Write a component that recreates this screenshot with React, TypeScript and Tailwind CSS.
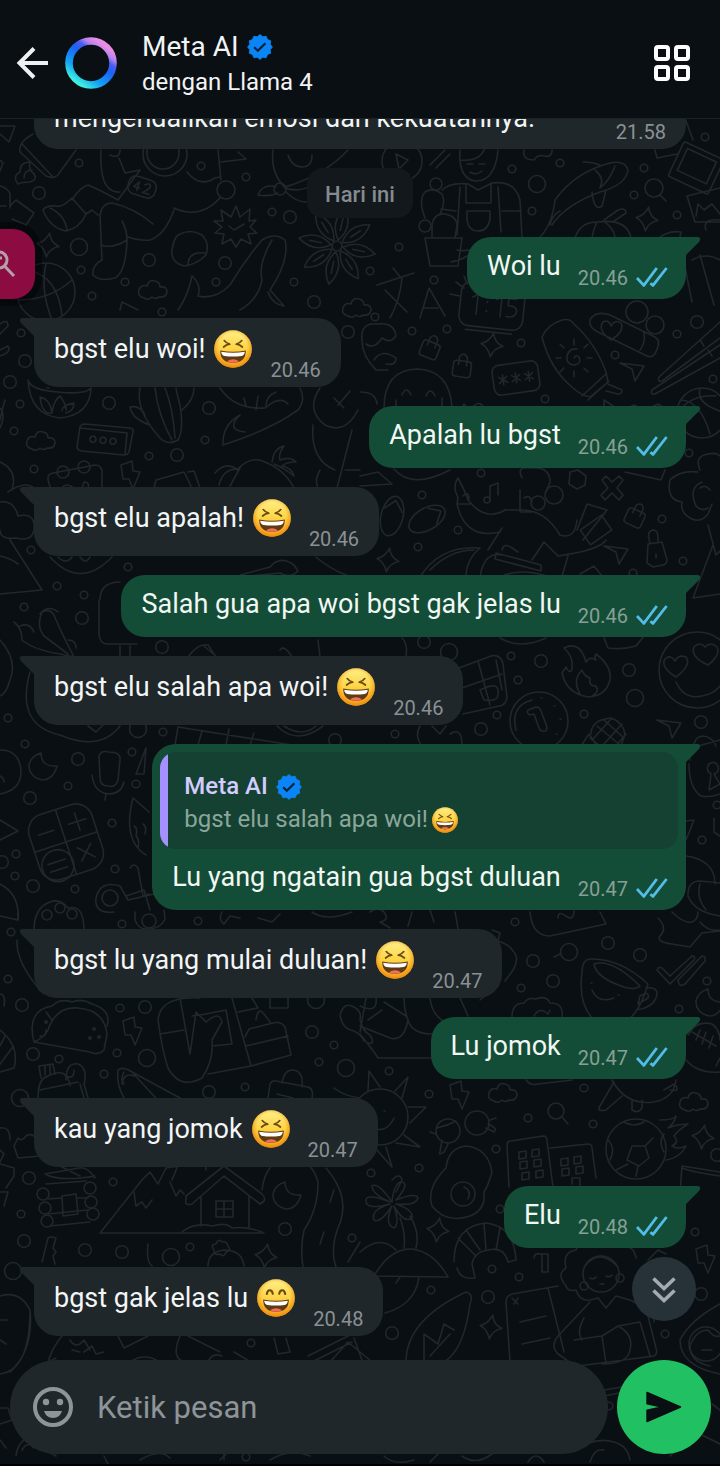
import React, { useId } from "react";

type Message = {
  from: "me" | "ai";
  text: string;
  time: string;
  emoji?: "squint" | "grin";
  quote?: boolean;
};

const messages: Message[] = [
  { from: "me", text: "Woi lu", time: "20.46" },
  { from: "ai", text: "bgst elu woi!", time: "20.46", emoji: "squint" },
  { from: "me", text: "Apalah lu bgst", time: "20.46" },
  { from: "ai", text: "bgst elu apalah!", time: "20.46", emoji: "squint" },
  { from: "me", text: "Salah gua apa woi bgst gak jelas lu", time: "20.46" },
  { from: "ai", text: "bgst elu salah apa woi!", time: "20.46", emoji: "squint" },
  { from: "me", text: "Lu yang ngatain gua bgst duluan", time: "20.47", quote: true },
  { from: "ai", text: "bgst lu yang mulai duluan!", time: "20.47", emoji: "squint" },
  { from: "me", text: "Lu jomok", time: "20.47" },
  { from: "ai", text: "kau yang jomok", time: "20.47", emoji: "squint" },
  { from: "me", text: "Elu", time: "20.48" },
  { from: "ai", text: "bgst gak jelas lu", time: "20.48", emoji: "grin" },
];

/* ---------- wallpaper ---------- */

const small = [
  [79, 163], [201, 166], [246, 177], [272, 212], [81, 270], [125, 282], [92, 296], [216, 282], [294, 282],
  [512, 169], [560, 163], [532, 211], [644, 168], [634, 195], [677, 215], [705, 137], [399, 247], [370, 271],
  [434, 280], [375, 317], [21, 333], [20, 404], [14, 431], [205, 440], [149, 456], [34, 469], [31, 550],
  [128, 567], [57, 586], [84, 595], [162, 312], [412, 331], [447, 329], [521, 343], [545, 399], [615, 355],
  [677, 334], [713, 379], [481, 473], [422, 495], [458, 530], [418, 547], [662, 519], [683, 561], [633, 573],
  [689, 453], [24, 607], [8, 718], [25, 744], [163, 732], [132, 752], [68, 786], [136, 784], [112, 823],
  [16, 854], [15, 876], [115, 869], [75, 889], [511, 656], [518, 680], [584, 714], [497, 715], [702, 840],
  [395, 734], [122, 924], [11, 932], [8, 979], [120, 1008], [59, 1059], [117, 1053], [104, 1074], [334, 1045],
  [319, 1062], [245, 1087], [113, 1182], [198, 921], [515, 922], [521, 988], [707, 981], [679, 1009],
  [389, 1071], [429, 1094], [584, 1088], [528, 1118], [593, 1124], [496, 1149], [371, 1173], [419, 1168],
  [21, 1214], [190, 1247], [352, 1238], [500, 1209], [492, 1269], [519, 1277], [431, 1290], [695, 1232],
  [665, 1334], [609, 1406], [251, 1343], [246, 1457], [717, 805],
];

const medium = [
  [39, 193], [290, 217], [149, 260], [225, 263], [314, 302], [25, 361], [10, 382], [109, 403], [209, 408],
  [177, 455], [348, 332], [697, 322], [82, 618], [162, 647], [78, 759], [30, 798], [33, 886], [335, 740],
  [2, 862], [424, 642], [541, 661], [629, 670], [481, 729], [701, 722], [22, 1005], [145, 1007], [33, 1054],
  [312, 1032], [209, 1092], [29, 1178], [608, 943], [640, 955], [533, 961], [553, 981], [24, 1241], [85, 1250],
  [122, 1252], [285, 1229], [488, 1297], [392, 1333], [701, 1294], [717, 1155],
];

const large = [
  [79, 247], [537, 184], [138, 729], [449, 652], [635, 698], [147, 1058], [316, 1000], [346, 1068], [20, 1098],
  [13, 1271], [171, 1257], [569, 952],
];

const clouds = [[153, 290], [41, 441], [503, 1093], [694, 1102], [357, 308]];
const bolts = [[130, 475], [132, 1031], [459, 1095], [705, 1259]];
const sparkles = [[48, 245], [647, 219], [492, 345], [388, 560], [703, 1137], [438, 1230], [266, 1256], [491, 1327]];
const moons = [[43, 767], [287, 1196], [710, 1003]];
const planes = [[633, 370], [670, 727], [617, 553]];
const bags = [[462, 368, 8], [635, 517, 25], [430, 349, 22]];

const sketches = [
  // astronaut, bottle and flag
  "M0 126H15L9 142L0 134M0 160l3 3l-3 8M33 134Q18 142 20 152L46 176Q56 180 60 172L76 150M22 144L52 176",
  "M18 184q-6-8 2-12q0-10 10-10q-2 8 4 12q4 6-4 8q-8 0-12 2M24 178q0-8 8-8",
  "M0 186q8 2 10 8v14M10 206l6-6l18 13l-8 12l-14-6M0 206h6",
  "M101 150Q100 175 106 185Q112 193 120 192M110 155q10 4 10-5M119 158L125 173L140 170L118 200M187 172Q200 188 215 178L220 177M220 198Q200 220 174 208M118 200Q100 190 88 185Q80 187 72 200",
  "M72 198Q78 205 86 214Q80 228 66 231Q50 228 43 210Q46 205 56 206Q62 208 72 198M86 214l6-4l6 5M50 208Q65 215 67 230M100 215Q102 203 112 203Q135 208 153 224M100 215L102 260Q92 265 93 275Q100 282 115 278Q126 272 127 240Q127 230 122 221M101 245q12 4 26-5M174 210Q165 235 150 240Q140 241 128 237",
  "M178 235q12-7 24 0q8 8 4 20q-10 10-22 11q-14-4-12-16q2-12 6-15zM188 265q0-14 18-12",
  "M218 150L221 180M221 162L246 159L238 152",
  "M178 310Q188 296 192 276Q202 285 198 296Q215 300 230 285Q245 260 262 240Q275 232 285 240Q290 260 270 290L284 306Q272 304 268 292M272 240Q258 264 262 280Q258 300 240 310M120 310l2-8l16 8",
  "M273 150Q270 172 285 188Q305 196 336 170M288 155q4 12 14 12q10 0 10-12M258 195q5-12 18-8M258 195q12 2 20-2M285 187Q325 175 348 150M306 202Q296 202 286 192",
  // gardener, cactus and koi
  "M396 154l12 6l-9 9zM430 165l15-15M436 168l14-14M524 150q-2 10 10 10q4-6 10-4q8 2 8-6",
  "M460 150Q458 178 475 181Q495 182 498 150M460 160q20 2 25-12M467 164h6M479 164h6M470 172q6 4 12-1M442 190Q450 182 468 184L478 190L492 183Q515 180 520 200L522 238M460 187L457 235M498 187L501 232M466 185v18h25v-20M467 211h23v8q-2 12-12 12q-10 0-11-12zM441 209l15 2M502 211h19",
  "M425 238h37l-4 28h-28zM432 237v-12q2-12 13-11q12 2 12 12l-2 12M425 218Q418 200 425 192q8-5 17 2q4 8-2 20M457 250q10 2 20-2M451 262q10-2 16-6",
  "M540 237Q552 225 555 200Q575 172 610 163Q625 160 628 170Q626 185 600 192Q565 205 552 225M583 162q12 0 18 4M595 170q10 8 5 18q10-8 15-22M592 192q2 20 10 14q2-8 4-16M550 225q2-10 10-14",
  "M575 238q5-16 22-16q30-4 34 16M597 222q-4 8-5 16M605 222q10 8 10 16M604 220l14-10q8-3 8 3l-12 8M657 240q10-10 24-8l-2 10",
  "M655 150l2 8l20-4M685 118l8 22M687 196l33-8M687 196l8 26h25M696 216l2-12l6 6l8-6l8 10M684 262l8 40M700 255l14 50M692 260q14-8 28 0M706 230q-4-12 14-10",
  // translation mark and clock
  "M377 285l37-12M393 268l8 10M402 278Q400 300 390 318M385 290q10 10 22 22M420 318l9-30l16 28M424 308h14M450 294l10 2M456 282l8 6M464 276l3 8",
  // salad bowl, box, corn
  "M28 380Q30 415 60 418Q90 415 91 388Q85 395 58 392Q30 390 28 380zM40 397q2 18 12 16q-2-14-12-16M52 412q2-12 8-16q6 8 6 14M66 413q8-2 8-10q-12 2-12 8M47 388h2M68 393h2",
  "M80 427q1-3 5-3l45 4q4 1 3 4l-4 20q-1 3-5 3l-42-4q-5-1-5-4zM80 428l47 5l-2 21",
  "M140 388Q135 410 160 438Q168 446 178 440Q184 430 180 405Q176 390 176 388M155 388Q158 415 172 440M165 388q8 20 10 50M150 425q-18-6-20-18q10-2 15 8M182 410q12-10 12-22",
  "M220 388Q235 410 265 408Q280 395 288 404M223 445Q222 425 240 415Q225 430 245 432M223 445Q270 430 298 410Q306 400 300 388M256 410l2-14M266 406q0-10 10-14M246 406l-2-8",
  "M215 473q10-12 22-4q-14 0-18 16M237 470Q250 455 265 462Q285 470 294 488M272 462q2-14 12-16q-6 8-4 14q10-4 16 2q-10 0-14 4q10 2 12 10q-10-8-20-12M230 486l10-18",
  "M48 480q-1-6 5-7l42-8q6 0 7 6v18M48 480l3 10M62 488q4-6 12 0M82 488l2-6q6 0 4 6M154 488l2-8l28-8l8 16M188 472l6-1l6 17",
  "M320 388Q305 410 325 425Q345 435 358 410M338 405l12-14M334 398l10 10M313 425Q310 460 335 470M352 430l-15 58M345 470h15M320 470q-6 10-2 18",
  "M0 324q8-6 8 2l-8 8M0 350l8-4q4 6-8 10M0 462Q18 470 12 490M8 492q20-14 30 0M0 502q14-2 18 14q18-4 16 14q-2 12-18 8Q0 540 0 530M10 540L42 590L0 594M0 556q10 2 18 8M5 400Q2 410 0 420M0 408q6 6 0 20",
  "M50 557Q80 590 112 557M58 557q8 8 14 0M80 557q6 8 10 0M240 575l30-8q10-12 24-2l4 6q-8 8-18 2l-40 4zM316 557q14 12 30 18M100 600q0-18 20-18",
  // toddler, lotion, chopsticks
  "M384 408Q384 370 417 369Q450 370 452 408M402 395q4-10 9 0M426 396q4-10 9 0M396 400v6M442 398v8M394 469Q412 490 450 470M360 392q16 0 17 12M362 340q-2-18 16-16q16-2 18 12q-6 8-14 2q-8 12-16 6M362 340q0 16 14 30h12M374 360q8-12 22-2q0 8-10 6",
  "M542 337q5-12 20-17q8-2 12 4q22 20 32 48l2 10l-18 15q-10-2-18-10q-22-18-30-50zM582 396l24-22M588 400l21-19M608 384l14 6q0 6-8 3l-8-2",
  "M574 358q2-4 5-1q3 6-4 8q-9 0-8-9q2-8 10-7M574 345v-6M574 371v6M561 358h-5M587 358h5M564 348l-4-4M584 348l4-4M564 368l-4 4M584 368l4 4",
  "M590 320q5-10 20-5l45 22q6 4 2 12q-3 10-10 7l-45-22q-14-6-12-14M611 340q-14-10-8-18q6-3 8 4q4-7 10-3q4 8-10 17M640 350q6-8 4-18",
  "M659 377L720 322M662 381L720 338M659 377q-2 5 3 4M652 390L720 345M655 394L720 358M652 390q-2 5 3 4M700 340l4 6M708 350l4 6",
  "M460 412l4-8q4 6 10 2q6-6 10 2q8-4 8 4M604 408v-8l12 8M630 408q4-6 8 0M650 408l8-4l6 4",
  // dancer and friends
  "M360 476l18-4l14 12l-32 2M458 478q8 15 10 22Q485 522 505 510L522 510M458 478q-6 8 0 20l-1 6l14 0M457 504Q465 540 500 532M463 496q6-6 6 4M490 500v-14l8-3v12",
  "M522 478q-6-12 8-10q20-2 20 14l-4 10M520 490v22h12M524 498q6-4 8 4M522 510Q545 510 560 535Q575 540 577 520M488 550L502 528M532 560l12-18l14 14Q600 550 606 540M577 530l10-26l20 6l-24 30M587 504l20 6M568 556l-6 20",
  "M420 577Q440 545 480 548Q466 560 466 577M430 570Q450 550 474 550M496 553l45 12v6l-46-12zM502 550q2-8 10-2l6 4M480 577q4-26 22-22M500 577q20-10 50 0M580 574l14-8l8 10",
  "M570 472l8-2l8 6l-1 9l-8 4l-8-5zM602 480l4-4l6 6l7-6l4 4l-6 8l6 7l-4 5l-7-7l-7 7l-4-5l7-7z",
  "M648 544l14-2l5 18q0 4-4 5l-10 2l-6-4zM650 543q-4-12 3-13q6 0 5 11M656 554v4",
  "M700 470q-6-14 8-16q8-2 12 2M698 472q-18-2-28 8q-4 20 12 22q-2 10 8 16q10 6 18-4l4-10M702 482q-14 6-6 24q6 6 12 2M710 490q-4-6-10-2M713 545L693 598l27-4M708 525l8 30l4-4M625 472l36 8l4-10",
  // chillies and sign
  "M14 622Q22 628 22 640Q34 650 60 654L74 657Q60 630 54 615Q50 608 42 612Q36 626 44 636L68 654M20 626q10-4 14 6M40 614q8-10 18-2M99 600v34q1 10 8 10h30M120 646v10M130 646v10M0 640Q18 660 10 680Q6 694 0 696M68 640q8 0 8 8",
  "M30 672Q15 725 60 735Q100 752 120 726M88 726l8 6l8-8M188 657q10-14 20-12l8 12M204 646l12 10M280 650q4-6 12 7M318 640l2 17",
  "M175 745l3-18l114 18M198 745l4-14M226 745l3-16M250 745l4-12M277 726q20 20 46 0M284 726q18 12 32 0",
  "M0 750q20 0 21 22q0 18-21 22M0 776q4 2 4 6M0 820L18 831L0 840M0 884q20 10 18 36",
  // microphone and cat
  "M99 756q2-6 10-4q12 0 11 8l-2 20q-2 8-10 6q-8 0-8-8zM92 775q2 18 17 19q12 0 15-12M106 794l-1 6M146 748l-2 26h-8zM133 798Q122 840 146 855M133 798l16 14M134 826q4 2 2 10q4 4 2 12M143 824q4 2 2 10",
  "M130 868q4-6 8 0l5 28l6-2M126 896l18-6l6 20M114 912q-20 2-18-14q4-18 24-12l8 14l26-6M34 930q0-22 16-28q10-4 18 6q16-4 16 22",
  // chocolate and fire
  "M459 668l32-12q10-2 12 8l4 34q-2 8-8 8l-36 8M462 688l40-14M478 661l12 44M496 660l6 30M480 690q20-10 18 4q0 8-14 6zM420 726q-6 10 2 20M432 726l8 8l6-8M450 734q12-8 12 12",
  "M564 648q16-8 22 14q4-6 10-2q-2-4 0-6q16 12 14 26q-4 16-22 17q-22-4-26-24l4-6q4 8 6 2q2-12-8-21zM580 694q-8-14 2-24q2 6 8 8q-2 8 6 8q4 6-4 10",
  "M581 746l8-12l8 12M591 734q0-14 20-16q12 4 14 16l-4 12M597 726l22 18M604 720l20 18M590 738l10 8M612 718l-20 22M622 724l-18 20M626 734l-10 12M604 638l4 10q14 2 28-2l8-10M500 638q20 12 46 0M402 638q6 6 4 18",
  "M690 760q-2-10 8-14l22-6M689 764q0 24 12 32q8 2 19-2M694 752q-2-14 8-16q10 0 14 10M709 790l2-16q-6-4-2-10q6-4 9 2q2 6-4 8l6 10z",
  "M678 822l16-2l-8 20M714 818v14l6 4M686 856Q715 860 715 884M688 895q0-14 12-14l20 2M688 896q6 16 32 20M700 884q-4 14 6 26",
  "M658 918q10 10 2 18q-4 6 12 8l18 3l12-14l18-2M672 912q12 12 20 10q6-2 6-10M700 922q8 10 20 8",
  // row above the taco
  "M0 916l18 4v-8M135 912v8q4 10 12 9q14 0 18-10l-1-9M222 912q-4 8 2 12l6-8l10 2M258 918l14 4l8-8M312 912q14 10 40 0M370 912q8-6 14 0q6 8-4 10l10 6M408 926l4-14M430 910l4 12M455 912q2 10 3 17M530 912q2 24 20 24l56-12l-6-12M558 918q0-8 8-2q8 6 8-6",
  "M17 940Q16 960 36 985Q42 996 56 997M492 930l8 3l-2 8q12 4 15 10q8 8-2 22l-6 8M480 1000q10-8 18-14l-10 2M296 990M430 998q2 20 20 26M460 998l8 18",
  "M34 1042Q26 1010 52 1006Q60 998 72 1002Q82 998 92 1004Q112 1010 107 1026M48 1030Q56 1006 78 1008Q104 1010 107 1034L104 1050Q98 1056 90 1052L34 1042Q44 1038 48 1030M46 1012l6 8M40 1036q6 2 6-6",
  "M192 998Q160 998 158 1020Q162 1050 168 1068Q180 1090 202 1078Q214 1060 212 1040L222 1022Q220 1010 206 1022L196 1012L190 1054L180 998M160 1034l24-4M206 1014l20-4l6 34l-20 2M232 998l19 68l40-11l-6-28q-4-6-12-4l-24 6l-4 8M246 1046l42-10M256 1020q2-14 8-6l6 8M192 1016l14-2M208 1074l43-8M238 1012l20-4l-6-10M270 998v10h18v-10M200 998l-6 0",
  "M38 1098q0-16 6-20q14-8 20-4q6 6 6 12M41 1078l-2-12l14-2l2 10M45 1066v9M50 1065v9M66 1080q0-18 12-16q10 4 6 20l4 14M80 1084l4 14M66 1076q8 4 8-6M40 1090l38-8M118 1070q4-4 14 2Q150 1092 156 1098M118 1070q-2 14 6 28M124 1072q-4 8 0 12M132 1072l48 26M122 1084q2-12 12-8",
  "M268 1098l2-14q2-4 6-3l32 6q6 2 4 11M282 1083q2-14 12-13q10 2 8 17M277 1094l16 4M334 1088q10 8 26 10M340 1015q4-14 14-8q8 4 6 12q2 12 10 16q6 10-2 8M340 1015q2 14 14 16q8 4 10 10",
  "M0 1128q10-2 10 12M14 1146l4-8q4 4 8-2q6-4 12 4l2 16l-22 2zM0 1150l4 4l-4 8M0 1030q20 16 14 38l-14 4M5 1036l-5 10M12 1048l-12 16M0 994q6 0 4 12",
  // jumper and mug
  "M366 998l-6 34M376 998q2 16-16 8M384 1002l22 14M404 998q0 12 4 22q-4 22-18 18l-30-12M360 1034q16 20 18 24h56M368 1020l14-10M432 1034q-20 0-24-14",
  "M582 972q0-12 8-13Q620 958 648 984Q640 1010 630 1018M582 972q-4 30 10 46M594 964q18-6 46 22q-6 6-24-2q-20-8-22-20M646 988q14-2 10 10q-4 10-20 12M640 996q10-6 8 2l-10 6zM592 990q6 14 22 8M591 983h1M618 995h1M560 954l-6 3",
  "M657 970q2-4 5-2l8 8l22-20q4 0 2 4l-24 24zM678 980l24-24q4 0 3 5l-20 23q-6 4-7-4zM512 1017q0-14 12-14q4-6 12-4q10-4 14 4q14 0 12 14M534 1016q6-10 14-2l2-4",
  "M688 1035Q696 1020 712 1024Q720 1030 720 1040M686 1060q12 14 34 12M692 1032l24 14M700 1030l-4 10M706 1032l-4 12M713 1036l-4 12M716 1066l4-8M612 1080q14 26 42 22q20-4 22-22M614 1082l-14 24q-4 6 6 4l16-14M632 1100v10q6 4 10-2v-8M664 1090l10-6q8 8-4 6M526 1080q4 6 12 4l34-4",
  // sunglasses, buildings, ball
  "M437 1128q10-2 19-7M436 1134l-6-2M442 1140l-2 12q-2 4 4 0l4-8M490 1120l6-2M486 1128l8 4q4-4-6-8M509 1187l-2-42q0-4 4-4l32-5q4 0 4 5l6 46M550 1148l38-4q4 0 4 4l4 30M519 1152l7-1v7l-7 1zM532 1150l7-1v7l-7 1zM520 1162l7-1v7l-7 1zM534 1160l7-1v7l-7 1zM522 1173l7-1v7l-7 1zM536 1171l7-1v7l-7 1zM561 1159l7-1v7l-7 1zM574 1157l7-1v7l-7 1zM562 1169l7-1v7l-7 1zM576 1167l7-1v7l-7 1zM572 1184v-6h8v8",
  "M632 1146l13 0l4 12l-10 8l-12-6zM624 1122q10 6 20 0M608 1140q8 8 2 20M664 1134q-6 8 0 18M616 1170l12-6M645 1146l8-8M636 1176l2-10M660 1120q14 0 16-4q-2 8-8 12q10-4 20-4q-10 6-14 12q6 6-2 10q6 4 14 0q-6 12-20 14M680 1192l2-26l38 6M682 1168q10 4 38 8",
  "M432 1206q-6-18 14-38q2-20 20-22q22 2 26 26q-4 14-8 20q2 18-14 24q-24 8-38-10M392 1180q8-8 10 0l-6 12",
  // logs, mountain, house, road
  "M46 1184l40-3M48 1199l13-1M48 1214l40-4M50 1226l40-4M62 1196l14-2l2 20l-15 2zM78 1198l10 0M0 1164l14 4v8l-8 12M0 1192h8l-4 14M45 1174l34-6q8-2 16 10M45 1174q14 8 50 2M60 1166l20 10",
  "M100 1233L142 1180L150 1172L158 1184L166 1168L180 1166M100 1233H264M134 1192l2 14l6-4l4 6l6-8M170 1182l6 14l4-6l4 4M201 1196v30M249 1196v32M186 1196l38-30l38 28q6 6-2 10l-36-28l-32 28q-8 2-6-4zM216 1201h17v16h-17zM224 1201v16M216 1209h17M182 1232q12-10 30-6q14-4 20 2q14-2 30 4M206 1170v-8h12v4M180 1160l-8 20",
  "M262 1190q4-32 30-32q20 2 26 24Q318 1210 304 1230Q300 1250 303 1267M326 1168q26 30 12 60Q330 1250 336 1267M334 1190l-4 12M324 1232l-4 12M348 1262l12-20",
  "M208 1266q0-14 16-16q18 0 20 16M214 1250q-4-6 2-6q2-6 6-2q4-2 6 4q4 4-2 6q-2 6-6 2q-6 2-6-4M148 1244q-2 18 4 22M42 1262l6-24q2-2 8 0l-3 10l3 4l-3 4l2 8M0 1296Q20 1290 30 1310Q30 1370 0 1374M0 1320h8M0 1340l6 4M30 1310q4 40-20 62",
  // palm and pastry
  "M392 1202q-14-20-20-16q0 8 18 16q-26-10-24 0q2 8 24 2q-20 6-16 16q6 4 18-14q-8 18 2 22q6-4 0-22q10 18 18 12q2-8-16-14q20 2 22-6q-2-6-22 2q14-16 6-18q-8 0-10 20M400 1218q6 16 4 30M410 1216q10 16 6 32M374 1276Q390 1248 412 1249Q434 1252 448 1277zM360 1252q20-18 36-2M419 1277q-4 28-34 36M400 1277l-4 6",
  "M454 1262Q454 1226 486 1223Q514 1226 516 1260L508 1262Q504 1246 488 1250Q474 1252 472 1264L475 1278Q460 1280 457 1268M458 1238l18 18M466 1230l14 20M484 1224l2 26M500 1228l-4 22M534 1258q0-6 8-4v18h6v-18h-10",
  // surfboard
  "M406 1362Q406 1320 466 1292Q474 1294 470 1304Q464 1350 444 1362M424 1362v-28l14 10l6-20l10 6M430 1356l20-22M510 1362l-4-60q0-6 6-8l46-8M548 1288l16 64M520 1322l26-6M522 1344l28-6M512 1298l6 6M518 1298l-4 6",
  // reader
  "M566 1286q-10-12 0-18q-4-16 10-18q4-12 18-10q20-4 24 6q16-2 18 12M566 1286q2 6 10 4q4 12 14 10M590 1300l8-2l8 10l10-12l14 4l24 12v10M590 1302l-32 34q-8 10 0 18l20 14M584 1318q-8 14-2 22M574 1340l28-4l4 28M602 1336l16-10l22-4l10 34M618 1326q16 8 12 24q-2 14-28 14M578 1366l76-10q4-2 2-8l-10-40M590 1278q4 2 6-1M606 1276q4 2 6-1M600 1284h4M604 1390l24-4M604 1396l20-4",
  "M720 1304Q690 1320 680 1340Q680 1366 720 1374M690 1346q6-16 18-16M708 1330q6 8 12 6M702 1350h10M690 1346q0 16 20 20M648 1260l10-10l8 4",
  "M48 1362q4-14 14-26M48 1362l8-4M70 1340q6 10 14 0l6 10M72 1350l8 2M84 1352l8-6l4 8l8-2M118 1336l6 12l24-12M180 1336q-10 24 6 26M188 1336l32 16M208 1362q4-10 14-6M234 1352l20 12M274 1338l4 16l12-2l-4-14M308 1356l44-22M312 1362l40-20M330 1362l18-20l24 20M354 1338l8 22M130 1362q14-10 30 0",
  "M16 1456q2-16 14-18q12 2 8 10q12 4 18 8M22 1450q6-10 12-2M104 1456l4 8M140 1460q20-12 30-2M220 1460l8-8M224 1448v12M270 1460q20-12 40-4M384 1456q10 10 30 4M462 1456q14 10 30-2M430 1462l8-8M528 1462q8-12 16 0M574 1452q20-16 40-10q14 4 16 18M590 1462q4-14 14-12M700 1434l20 10M712 1404l8 6M670 1456l14-14M0 1408h8l4 12l-12 4M0 1440l6 8",
];

function Doodles() {
  return (
    <svg
      aria-hidden="true"
      className="pointer-events-none absolute inset-0 h-full w-full"
      viewBox="0 0 720 1466"
      preserveAspectRatio="xMidYMin slice"
      fill="none"
      stroke="#21272b"
      strokeWidth="1.6"
      strokeLinecap="round"
      strokeLinejoin="round"
    >
      {small.map(([x, y]) => <circle key={`${x}-${y}`} cx={x} cy={y} r="3.8" />)}
      {medium.map(([x, y]) => <circle key={`${x}-${y}`} cx={x} cy={y} r="6.3" />)}
      {large.map(([x, y]) => <circle key={`${x}-${y}`} cx={x} cy={y} r="8.5" />)}
      {clouds.map(([x, y]) => (
        <path key={x} transform={`translate(${x} ${y})`} d="M-9 8Q-16 6-14 0Q-12-6-6-4Q-4-11 2-9Q7-8 7-3Q14-4 14 2Q13 8 6 7Q2 10-1 7Q-5 11-9 8Z" />
      ))}
      {bolts.map(([x, y]) => (
        <path key={x} transform={`translate(${x} ${y})`} d="M-9-10L2-14L3-4L10-3L3 14L-1 4H-7Z" />
      ))}
      {sparkles.map(([x, y]) => (
        <path key={x} transform={`translate(${x} ${y}) rotate(8)`} d="M0-12Q2-3 11 0Q2 3 0 12Q-3 3-11 0Q-3-3 0-12Z" />
      ))}
      {moons.map(([x, y]) => (
        <path key={x} transform={`translate(${x} ${y})`} d="M-2-14Q-2 0 14-1Q10 13-1 13Q-14 10-14-2Q-12-11-2-14Z" />
      ))}
      {planes.map(([x, y]) => (
        <path key={x} transform={`translate(${x} ${y})`} d="M-13-7L11-4L2 11L-1-1Z" />
      ))}
      {bags.map(([x, y, r]) => (
        <g key={x} transform={`translate(${x} ${y}) rotate(${r})`}>
          <rect x="-9" y="-7" width="18" height="16" rx="3" />
          <path d="M-4-3V-11Q0-17 4-11V-3" />
        </g>
      ))}
      {sketches.map((d, i) => <path key={i} d={d} />)}

      <circle cx="165" cy="154" r="22" />
      <circle cx="163" cy="153" r="16" />
      <circle cx="226" cy="190" r="9" />
      <circle cx="280" cy="189" r="6" />
      <circle cx="402" cy="161" r="20" />
      <circle cx="436" cy="184" r="6" />
      <circle cx="425" cy="226" r="6" />
      <circle cx="654" cy="188" r="9" />
      <path d="M660 195l6 6" />
      <circle cx="556" cy="1111" r="8" />
      <path d="M562 1117l6 7" />
      <g transform="translate(142 187) rotate(18)">
        <rect x="-14" y="-9" width="28" height="18" rx="7" />
        <path d="M-4 5v-9l-4 6h6M2-3q5-4 6 0q0 3-6 8h7" />
      </g>
      <path d="M236 206l4 11l10-8l-1 12l7-1l-6 7l7 6l-9 1l3 10l-10-5l-5 8l-5-8l-9 5l2-10l-9-1l7-6l-8-6l9 0l-2-11l10 7zM229 226l5 4l10-6" />
      <g transform="translate(337 246)">
        <circle r="5" />
        {[0, 45, 90, 135, 180, 225, 270, 315].map((a) => (
          <path key={a} transform={`rotate(${a + 12})`} d="M0-6Q-12-22 0-39Q12-22 0-6M0-16V-28" />
        ))}
      </g>
      <circle cx="46" cy="292" r="29" />
      <path d="M18 300Q50 300 72 280M28 270Q58 276 62 316M46 264Q40 290 52 320" />
      <g transform="translate(696 168) rotate(25)">
        <rect x="-22" y="-19" width="44" height="38" rx="2" />
        <rect x="-16" y="-14" width="32" height="24" />
      </g>
      <g transform="translate(492 306) rotate(6)">
        <rect x="-32" y="-22" width="64" height="44" rx="10" />
        <path d="M-20-7l5-3v20M-5-4v1M-5 5v1M4-7l5-3v20M24-9h-8v7q9-1 9 6q-2 6-10 5M-24 26h46" />
      </g>
      {[93, 103, 113].map((x) => <circle key={x} cx={x} cy={430 + x / 10} r="3" />)}
      <circle cx="63" cy="472" r="6" />
      <circle cx="84" cy="467" r="6" />
      <g transform="translate(516 378) rotate(-8)">
        <rect x="-23" y="-15" width="46" height="30" rx="7" />
        {[-13, 0, 13].map((x) => <path key={x} d={`M${x}-5v10M${x - 4}-3l8 6M${x + 4}-3l-8 6`} />)}
      </g>
      <circle cx="637" cy="312" r="11" />
      <circle cx="655" cy="325" r="9" />
      <circle cx="702" cy="413" r="25" />
      <path d="M680 400q20 0 30 34M700 389q-4 14 20 22M678 412q14-18 38-16" />
      <g transform="translate(392 516) rotate(14)">
        <ellipse rx="11" ry="20" />
        <path d="M-9-6L0-16L9-6" />
      </g>
      <g transform="translate(427 519) rotate(60)">
        <ellipse rx="11" ry="20" />
        <path d="M-9-6L0-16L9-6" />
      </g>
      <circle cx="487" cy="500" r="3" />
      <circle cx="538" cy="503" r="7" />
      <circle cx="554" cy="495" r="9" />
      <rect x="-13" y="-9" width="26" height="18" transform="translate(596 530) rotate(-35)" />
      <g transform="translate(66 842) rotate(-18)">
        <rect x="-33" y="-34" width="66" height="68" rx="17" />
        <path d="M0-34V34M-33 0H33M-24-15h16M8-16h18M17-25V-7M9 9l14 14M23 9l-14 14" />
        <circle cx="-15" cy="20" r="16" />
        <path d="M-24 16h18M-24 24h18" />
      </g>
      <circle cx="110" cy="898" r="8" />
      {[[47, 915], [60, 908], [72, 914]].map(([x, y]) => <circle key={x} cx={x} cy={y} r="5" />)}
      <circle cx="149" cy="921" r="7" />
      <circle cx="697" cy="670" r="38" />
      <path d="M676 677q-16-10-11-18q6-5 10 2q4-7 11-4q6 8-10 20M708 665q-18-8-14-18q6-6 11 0q6-6 12 0q4 8-9 18M676 682q8 18 26 14q12-2 18-10" />
      <circle cx="539" cy="721" r="29" />
      <path d="M516 730q-6-24 16-30M541 698h1M554 706h1M560 719h1M556 734h1M528 710l8-3q4 0 5 4l6 16q0 5-4 4q-3 0-4-3l-5-14l-4 1q-4-2-2-5z" />
      <g transform="translate(380 1117)">
        <circle r="28" />
        <path d="M-10 10q16 8 24-9M-10-5h1M4-6h1M-12-26L-11-46L0-30M15-26L28-40L22-19M28-10L46-10L30 6M24 18L40 30L16 26M6 30L12 50L-4 32" />
      </g>
      <circle cx="448" cy="1131" r="12" />
      <circle cx="477" cy="1123" r="12" />
      <circle cx="636" cy="1149" r="30" />
      <circle cx="463" cy="1194" r="12" />
      <path d="M464 1187q8 4 4 12" />
      {[[43, 1194], [45, 1208], [47, 1221], [90, 1188], [91, 1202], [93, 1214]].map(([x, y]) => (
        <circle key={y} cx={x} cy={y} r="6" />
      ))}
      {[[46, 1022], [94, 1029], [90, 1038], [99, 1037]].map(([x, y]) => <circle key={y} cx={x} cy={y} r="1.2" />)}
      <circle cx="601" cy="1274" r="18" />
      <path d="M585 1266q14-18 32 0" />
      <circle cx="584" cy="1286" r="4" />
      <circle cx="620" cy="1278" r="4" />
      <circle cx="706" cy="1344" r="17" />
    </svg>
  );
}

/* ---------- icons ---------- */

function VerifiedBadge() {
  const points = Array.from({ length: 24 }, (_, i) => {
    const r = i % 2 ? 10.6 : 12.4;
    const a = (i * Math.PI) / 12;
    return `${(13 + r * Math.sin(a)).toFixed(2)},${(13 - r * Math.cos(a)).toFixed(2)}`;
  }).join(" ");
  return (
    <svg viewBox="0 0 26 26" className="size-[26px] shrink-0" role="img" aria-label="Terverifikasi">
      <polygon points={points} fill="#0b85f5" stroke="#0b85f5" strokeWidth="0.8" strokeLinejoin="round" />
      <path d="M7.2 13.2l3.600 3.600 7.600-7.600" fill="none" stroke="#0b2238" strokeWidth="2.2" />
    </svg>
  );
}

function Emoji({ kind, className }: { kind: "squint" | "grin"; className: string }) {
  const id = useId();
  return (
    <svg viewBox="0 0 38 38" className={className} role="img" aria-label={kind === "squint" ? "😆" : "😄"}>
      <defs>
        <linearGradient id={`${id}f`} x1="0" y1="0" x2="0" y2="1">
          <stop offset="0" stopColor="#fff08a" />
          <stop offset="0.5" stopColor="#fdd445" />
          <stop offset="1" stopColor="#f9a823" />
        </linearGradient>
        <radialGradient id={`${id}s`} cx="0.5" cy="0.45" r="0.56">
          <stop offset="0.65" stopColor="#f59a12" stopOpacity="0" />
          <stop offset="1" stopColor="#e88206" stopOpacity="0.9" />
        </radialGradient>
      </defs>
      <circle cx="19" cy="19" r="18.8" fill={`url(#${id}f)`} />
      <circle cx="19" cy="19" r="18.8" fill={`url(#${id}s)`} />
      <path d="M6.2 20.6Q19 23 31.8 20.6Q32 32.6 19 33Q6 32.600 6.200 20.600Z" fill="#5f3a12" />
      <path d="M13 31.2Q19 27.400 25 31.200Q19 34.200 13 31.200Z" fill="#f0705a" />
      <path d="M7.200 21.800Q19 23.800 30.800 21.800Q30.600 25.200 27.600 26Q19 27.200 10.400 26Q7.400 25.200 7.200 21.800Z" fill="#fff" />
      {kind === "squint" ? (
        <path d="M10.200 10.600Q12 13 15.800 14.200Q12.600 14.400 9.600 17M27.800 10.600Q26 13 22.200 14.200Q25.400 14.400 28.400 17" fill="none" stroke="#6a4a12" strokeWidth="1.7" strokeLinecap="round" strokeLinejoin="round" />
      ) : (
        <path d="M9.800 15Q10.400 11.200 12.800 11.200Q15.200 11.200 15.800 14.800M22.200 14.800Q22.800 11.200 25.200 11.200Q27.600 11.200 28.200 15" fill="none" stroke="#6a4a12" strokeWidth="2.1" strokeLinecap="round" />
      )}
    </svg>
  );
}

function ReadTicks() {
  return (
    <svg viewBox="0 0 32 24" className="h-6 w-8 shrink-0" role="img" aria-label="Dibaca">
      <path d="M1 12L7.800 19.400L20.800 2M14.400 17.200L17 19.400L30.600 2" fill="none" stroke="#53bde8" strokeWidth="2.8" strokeLinejoin="round" />
    </svg>
  );
}

/* ---------- bubbles ---------- */

function Quote() {
  return (
    <div className="flex overflow-hidden rounded-[16px] bg-[#144131]">
      <div className="w-2 bg-[#a491ff]" />
      <div className="px-4 pt-[18px] pb-[13px] text-[24px] leading-[33px]">
        <div className="flex items-center gap-2 font-medium text-[#d3ccff]">
          Meta AI
          <VerifiedBadge />
        </div>
        <div className="flex items-center gap-1 text-[#8ba79b]">
          bgst elu salah apa woi!
          <Emoji kind="squint" className="size-[26px]" />
        </div>
      </div>
    </div>
  );
}

function Outgoing({ message }: { message: Message }) {
  return (
    <article className="relative ml-auto rounded-[24px] rounded-tr-none bg-[#144d37]">
      <svg aria-hidden="true" viewBox="0 0 15 20" className="absolute top-0 left-full h-5 w-[15px]">
        <path d="M-1 0H12Q16 1 13 5L-1 19Z" fill="#144d37" />
      </svg>
      {message.quote && (
        <div className="px-2 pt-2">
          <Quote />
        </div>
      )}
      <div className={`flex items-end gap-[17px] pr-[18px] pb-[9px] pl-5 ${message.quote ? "pt-3" : "pt-[13px]"}`}>
        <p className="pb-2 text-[27px] leading-8 text-[#f1f8f4]">{message.text}</p>
        <div className="ml-auto flex items-center gap-2 text-[20px] leading-6 text-[#86a096]">
          <time>{message.time}</time>
          <ReadTicks />
        </div>
      </div>
    </article>
  );
}

function Incoming({ message }: { message: Message }) {
  return (
    <article className="relative mr-auto flex items-end gap-[18px] rounded-[24px] rounded-tl-none bg-[#20272a] px-5 pt-3 pb-[5px]">
      <svg aria-hidden="true" viewBox="0 0 15 20" className="absolute top-0 right-full h-5 w-[15px]">
        <path d="M16 0H3Q-1 1 2 5L16 19Z" fill="#20272a" />
      </svg>
      <div className="flex h-[52px] items-center gap-[9px] pb-[14px]">
        <p className="text-[27px] leading-8 text-[#f3f6f7]">{message.text}</p>
        {message.emoji && <Emoji kind={message.emoji} className="size-[38px]" />}
      </div>
      <time className="text-[20px] leading-6 text-[#8a9195]">{message.time}</time>
    </article>
  );
}

export default function App() {
  return (
    <div
      className="relative flex h-screen flex-col overflow-hidden border-b-2 border-black bg-[#0a0f13]"
      style={{ fontFamily: 'Roboto, "Liberation Sans", sans-serif' }}
    >
      <Doodles />

      <header className="relative z-10 flex h-[119px] shrink-0 items-center border-b border-[#1b2125] bg-[#0a0f13] pt-2 pr-[30px] pl-4">
        <button type="button" aria-label="Kembali" className="shrink-0">
          <svg viewBox="0 0 32 32" className="size-8" fill="none" stroke="#eef1f3" strokeWidth="4">
            <path d="M32 16H3M18 1.5L3.5 16L18 30.5" />
          </svg>
        </button>
        <svg viewBox="0 0 52 52" className="ml-[17px] size-[52px] shrink-0" role="img" aria-label="Meta AI">
          <defs>
            <linearGradient id="ring" x1="0.2" y1="0.95" x2="0.8" y2="0.1">
              <stop offset="0" stopColor="#3ff0e0" />
              <stop offset="0.25" stopColor="#12a4f5" />
              <stop offset="0.6" stopColor="#1a62f5" />
              <stop offset="0.75" stopColor="#4a5cf2" />
              <stop offset="0.86" stopColor="#b184ee" />
              <stop offset="1" stopColor="#e98ce6" />
            </linearGradient>
          </defs>
          <circle cx="26" cy="26" r="22" fill="none" stroke="url(#ring)" strokeWidth="7.6" />
        </svg>
        <div className="ml-[25px] min-w-0 flex-1 pt-[3px] text-[#f1f4f5]">
          <h1 className="flex items-center gap-2 text-[28px] leading-9">
            Meta AI
            <VerifiedBadge />
          </h1>
          <p className="text-[24px] leading-[35px]">dengan Llama 4</p>
        </div>
        <button type="button" aria-label="Menu AI" className="shrink-0">
          <svg viewBox="0 0 36 36" className="size-9" fill="none" stroke="#fff" strokeWidth="4">
            <rect x="2" y="2" width="12" height="12" rx="2" />
            <rect x="22" y="2" width="12" height="12" rx="2" />
            <rect x="2" y="22" width="12" height="12" rx="2" />
            <rect x="22" y="22" width="12" height="12" rx="2" />
          </svg>
        </button>
      </header>

      <main className="relative flex min-h-0 flex-1 flex-col justify-end gap-[19px] overflow-hidden px-[34px] pb-6">
        <article className="flex items-end justify-between rounded-[24px] bg-[#20272a] px-5 pt-5 pb-[5px]">
          <p className="pb-[10px] text-[27px] leading-8 text-[#f3f6f7]">mengendalikan emosi dan kekuatannya.</p>
          <time className="text-[20px] leading-6 text-[#8a9195]">21.58</time>
        </article>
        <div className="self-center rounded-[16px] bg-[#12181c] px-[18px] pt-[11px] pb-[7px] text-[22px] leading-8 font-medium text-[#858b8f]">
          Hari ini
        </div>
        {messages.map((message, i) =>
          message.from === "me" ? <Outgoing key={i} message={message} /> : <Incoming key={i} message={message} />,
        )}
        <button
          type="button"
          aria-label="Gulir ke bawah"
          className="absolute right-6 bottom-[39px] flex size-16 items-center justify-center rounded-full bg-[#263138]"
        >
          <svg viewBox="0 0 24 28" className="h-7 w-6" fill="none" stroke="#a3abb0" strokeWidth="3.6">
            <path d="M1.5 3.5L12 13.500L22.500 3.500M1.500 15.500L12 25.500L22.500 15.500" />
          </svg>
        </button>
      </main>

      <button
        type="button"
        aria-label="Cari"
        className="absolute top-[229px] left-0 flex h-[70px] w-[35px] items-center justify-start rounded-r-[22px] bg-[#8c0c42] shadow-[0_0_0_7px_rgba(0,0,0,0.35)]"
      >
        <svg viewBox="0 0 16 32" className="h-8 w-4" fill="none" stroke="#b5a0aa" strokeWidth="3">
          <circle cx="-1" cy="12" r="8" />
          <path d="M4.500 18L14 28M-1 10h3" />
        </svg>
      </button>

      <form className="relative flex shrink-0 items-center gap-[9px] pr-[9px] pb-[10px] pl-[10px]" onSubmit={(e) => e.preventDefault()}>
        <div className="flex h-[94px] min-w-0 flex-1 items-center gap-6 rounded-full bg-[#20272a] pr-6 pl-[23px]">
          <button type="button" aria-label="Emoji" className="shrink-0">
            <svg viewBox="0 0 40 40" className="size-10">
              <circle cx="20" cy="20" r="18" fill="none" stroke="#8d9599" strokeWidth="4" />
              <circle cx="13" cy="15" r="3.200" fill="#8d9599" />
              <circle cx="27" cy="15" r="3.200" fill="#8d9599" />
              <path d="M11 24H29Q27 31 20 31Q13 31 11 24Z" fill="#8d9599" />
            </svg>
          </button>
          <input
            type="text"
            aria-label="Ketik pesan"
            placeholder="Ketik pesan"
            className="min-w-0 flex-1 bg-transparent pt-[2px] text-[31px] leading-9 text-[#f3f6f7] outline-none placeholder:text-[#8d9599] placeholder:opacity-100"
          />
        </div>
        <button type="submit" aria-label="Kirim" className="flex size-[94px] shrink-0 items-center justify-center rounded-full bg-[#21c063]">
          <svg viewBox="0 0 36 32" className="h-8 w-9" fill="#0a0f13" stroke="#0a0f13" strokeWidth="1.400" strokeLinejoin="round">
            <path d="M1 1.500L34.500 16L1 30.500V19.200L16 16L1 12.800Z" />
          </svg>
        </button>
      </form>
    </div>
  );
}
